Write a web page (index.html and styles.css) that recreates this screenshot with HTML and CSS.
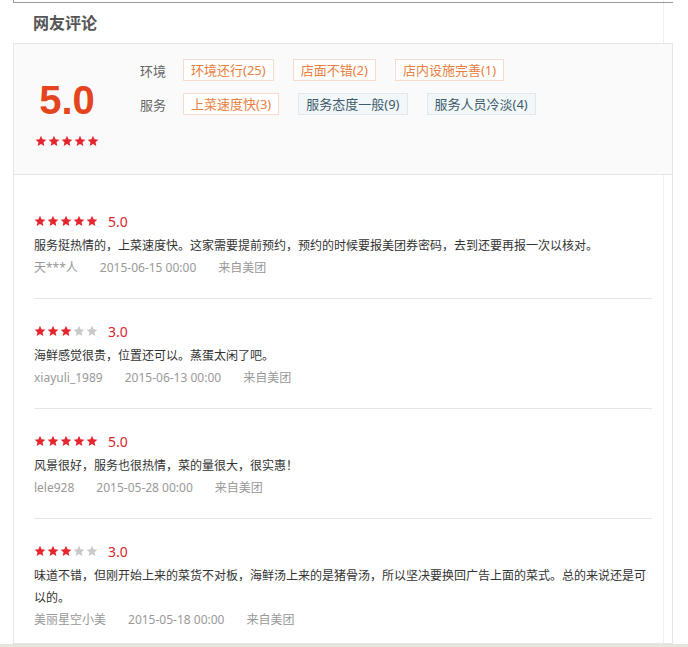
FILE: index.html
```html
<!DOCTYPE html>
<html lang="zh-CN">
<head>
    <meta charset="UTF-8">
    <title>网友评论</title>
    <link rel="stylesheet" href="styles.css">
</head>
<body>
    <svg width="0" height="0" class="defs">
        <symbol id="star" viewBox="0 0 24 24">
            <polygon points="12 1.5 15.1 8.6 22.8 9.3 17 14.4 18.7 22 12 18 5.3 22 7 14.4 1.2 9.3 8.9 8.6"/>
        </symbol>
    </svg>

    <div class="frame">
        <div class="page">
            <div class="top-edge"></div>
            <h2 class="title">网友评论</h2>

            <div class="box">
                <div class="summary">
                    <div class="score">
                        <div class="score-num">5.0</div>
                        <div class="stars">
                            <svg class="star on"><use href="#star"/></svg><svg class="star on"><use href="#star"/></svg><svg class="star on"><use href="#star"/></svg><svg class="star on"><use href="#star"/></svg><svg class="star on"><use href="#star"/></svg>
                        </div>
                    </div>
                    <div class="tags">
                        <div class="tag-row">
                            <span class="tag-label">环境</span>
                            <span class="tag good">环境还行(25)</span>
                            <span class="tag good">店面不错(2)</span>
                            <span class="tag good">店内设施完善(1)</span>
                        </div>
                        <div class="tag-row">
                            <span class="tag-label">服务</span>
                            <span class="tag good">上菜速度快(3)</span>
                            <span class="tag bad">服务态度一般(9)</span>
                            <span class="tag bad">服务人员冷淡(4)</span>
                        </div>
                    </div>
                </div>

                <ul class="reviews">
                    <li class="review">
                        <div class="rating">
                            <span class="stars">
                                <svg class="star on"><use href="#star"/></svg><svg class="star on"><use href="#star"/></svg><svg class="star on"><use href="#star"/></svg><svg class="star on"><use href="#star"/></svg><svg class="star on"><use href="#star"/></svg>
                            </span>
                            <span class="rating-num">5.0</span>
                        </div>
                        <p class="review-text">服务挺热情的，上菜速度快。这家需要提前预约，预约的时候要报美团券密码，去到还要再报一次以核对。</p>
                        <div class="meta"><span>天***人</span><span>2015-06-15 00:00</span><span>来自美团</span></div>
                    </li>
                    <li class="review">
                        <div class="rating">
                            <span class="stars">
                                <svg class="star on"><use href="#star"/></svg><svg class="star on"><use href="#star"/></svg><svg class="star on"><use href="#star"/></svg><svg class="star"><use href="#star"/></svg><svg class="star"><use href="#star"/></svg>
                            </span>
                            <span class="rating-num">3.0</span>
                        </div>
                        <p class="review-text">海鲜感觉很贵，位置还可以。蒸蛋太闲了吧。</p>
                        <div class="meta"><span>xiayuli_1989</span><span>2015-06-13 00:00</span><span>来自美团</span></div>
                    </li>
                    <li class="review">
                        <div class="rating">
                            <span class="stars">
                                <svg class="star on"><use href="#star"/></svg><svg class="star on"><use href="#star"/></svg><svg class="star on"><use href="#star"/></svg><svg class="star on"><use href="#star"/></svg><svg class="star on"><use href="#star"/></svg>
                            </span>
                            <span class="rating-num">5.0</span>
                        </div>
                        <p class="review-text">风景很好，服务也很热情，菜的量很大，很实惠！</p>
                        <div class="meta"><span>lele928</span><span>2015-05-28 00:00</span><span>来自美团</span></div>
                    </li>
                    <li class="review">
                        <div class="rating">
                            <span class="stars">
                                <svg class="star on"><use href="#star"/></svg><svg class="star on"><use href="#star"/></svg><svg class="star on"><use href="#star"/></svg><svg class="star"><use href="#star"/></svg><svg class="star"><use href="#star"/></svg>
                            </span>
                            <span class="rating-num">3.0</span>
                        </div>
                        <p class="review-text">味道不错，但刚开始上来的菜货不对板，海鲜汤上来的是猪骨汤，所以坚决要换回广告上面的菜式。总的来说还是可以的。</p>
                        <div class="meta"><span>美丽星空小美</span><span>2015-05-18 00:00</span><span>来自美团</span></div>
                    </li>
                </ul>
            </div>
        </div>
    </div>
    <div class="page-foot"></div>
</body>
</html>
```

FILE: styles.css
```css
body {
    margin: 0;
    background-color: #fff;
    font-family: "Noto Sans", "Noto Sans CJK SC", sans-serif;
    color: #333;
}

.defs {
    position: absolute;
}

.frame {
    width: 663px;
    border-right: 1px solid #efefef;
}

.page {
    width: 660px;
    margin-left: 13px;
}

.top-edge {
    height: 2px;
    border-left: 1px solid #9a9a9a;
    border-bottom: 1px solid #9a9a9a;
}

.title {
    margin: 0;
    height: 40px;
    line-height: 40px;
    padding-left: 20px;
    font-size: 16px;
    font-weight: bold;
    color: #555;
}

.box {
    border: 1px solid #e6e6e6;
    border-top: none;
}

/* summary block */
.summary {
    display: flex;
    height: 130px;
    background-color: #fafafa;
    border-top: 1px solid #e6e6e6;
    border-bottom: 1px solid #e6e6e6;
}

.score {
    width: 106px;
    padding-top: 31px;
    text-align: center;
}

.score-num {
    font-family: "Liberation Sans", Arial, sans-serif;
    font-size: 40px;
    font-weight: bold;
    line-height: 50px;
    color: #e4451d;
}

.score .stars {
    margin-top: 10px;
    justify-content: center;
}

.stars {
    display: flex;
    height: 12px;
}

.star {
    width: 12px;
    height: 12px;
    margin-right: 1px;
    fill: #c9c9c9;
}

.star.on {
    fill: #e5262e;
}

.tags {
    padding: 15px 0 0 20px;
}

.tag-row {
    display: flex;
    align-items: center;
    height: 22px;
    margin-bottom: 12px;
}

.tag-label {
    width: 43px;
    font-size: 13px;
    color: #666;
}

.tag {
    height: 20px;
    line-height: 20px;
    padding: 0 7px;
    margin-right: 19px;
    font-size: 13px;
    border: 1px solid #f5dccb;
    background-color: #fff;
    color: #e8803e;
}

.tag.bad {
    border-color: #dde9ed;
    background-color: #f2f8f9;
    color: #3f5b6b;
}

/* review list */
.reviews {
    list-style: none;
    margin: 0;
    padding: 14px 20px 0;
}

.review {
    padding: 20px 0 19px;
    border-bottom: 1px solid #e6e6e6;
}

.review:last-child {
    padding-bottom: 12px;
    border-bottom: none;
}

.rating {
    display: flex;
    align-items: center;
    height: 24px;
    margin-bottom: 2px;
}

.rating-num {
    margin-left: 9px;
    font-size: 14px;
    color: #d7262c;
}

.review-text {
    margin: 0;
    font-size: 12px;
    line-height: 22px;
    color: #333;
}

.meta {
    font-size: 12px;
    line-height: 22px;
    color: #999;
}

.meta span {
    margin-right: 22px;
}

.page-foot {
    height: 6px;
    background: linear-gradient(#e3e2d6, #f1f0e8);
}
```
